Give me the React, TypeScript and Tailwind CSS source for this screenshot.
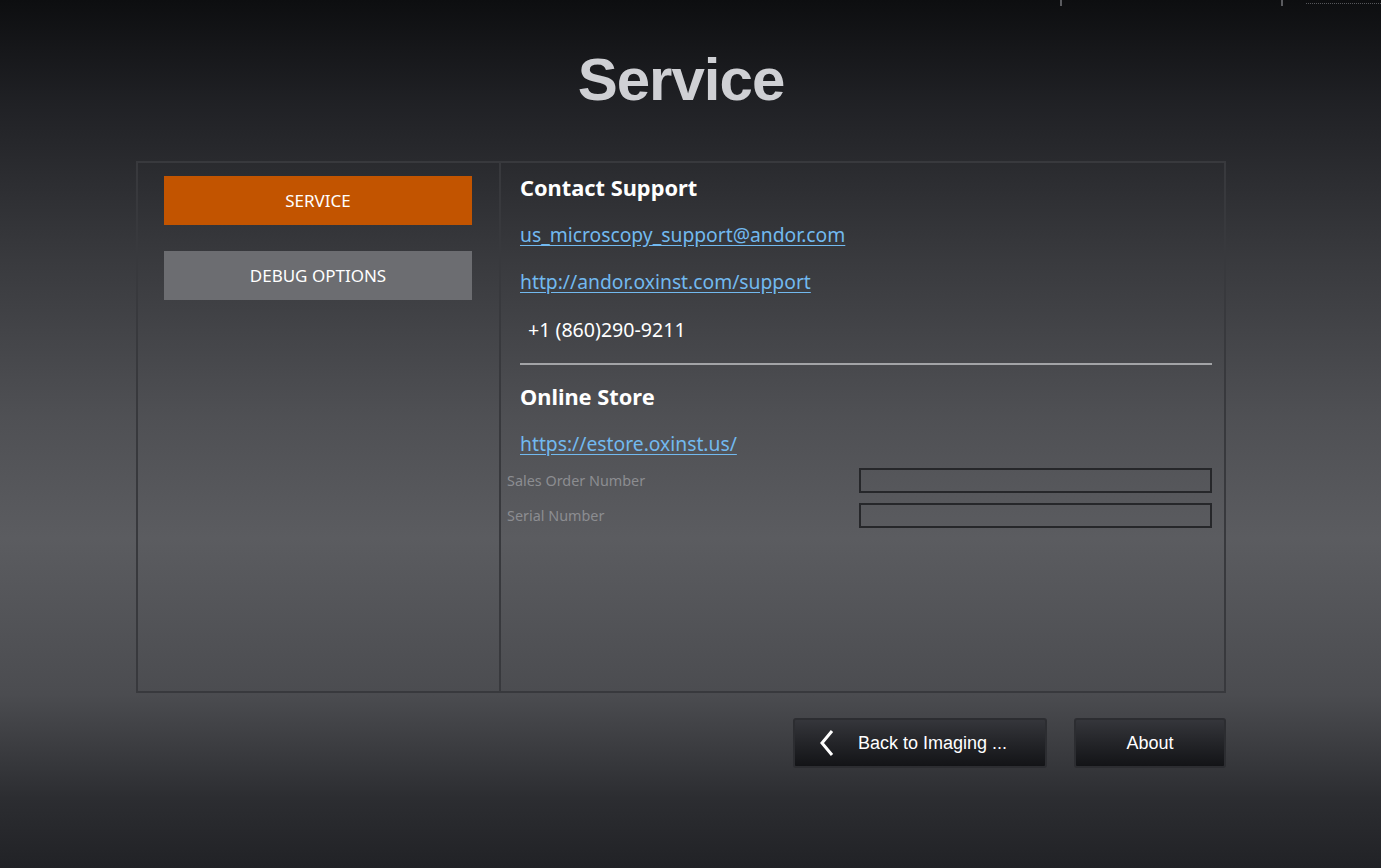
const MenuButton = ({ label, active }: { label: string; active?: boolean }) => (
  <button
    className={
      active
        ? 'w-[308px] h-[49px] bg-[#c25400] text-white text-[17px] flex items-center justify-center'
        : 'w-[308px] h-[49px] bg-[#6c6d71] text-white text-[17px] flex items-center justify-center'
    }
  >
    {label}
  </button>
)

const FooterButton = ({ children, className }: { children: React.ReactNode; className: string }) => (
  <button
    className={
      'h-[50px] rounded-[3px] border-2 border-[#2c2d31] bg-gradient-to-b from-[#35363b] to-[#131417] text-white text-[18px] font-["Liberation_Sans",sans-serif] flex items-center ' +
      className
    }
  >
    {children}
  </button>
)

export default function App() {
  return (
    <div className="relative w-full min-h-[868px] bg-[linear-gradient(to_bottom,#0d0e10_0%,#202125_12%,#393a3e_30%,#4f5054_48%,#5b5c60_62%,#4b4c50_80%,#2c2d31_92%,#212226_100%)] font-['Noto_Sans',sans-serif] overflow-hidden">
      {/* leftover toolbar marks */}
      <div className="absolute top-0 left-[1060px] w-[2px] h-[6px] bg-[#5a5b5f]" />
      <div className="absolute top-0 left-[1281px] w-[2px] h-[6px] bg-[#5a5b5f]" />
      <div className="absolute top-[3px] left-[1306px] w-[75px] border-t border-dotted border-[#55565a]" />

      <div className="ml-[136px] w-[1090px] pt-[40px]">
        <h1 className="h-[80px] flex items-center justify-center text-[60px] font-bold tracking-[-1px] text-[#cfd0d4] font-['Liberation_Sans',sans-serif]">
          Service
        </h1>

        <div className="mt-[41px] h-[532px] border-2 border-[#38393d] flex">
          {/* left menu */}
          <div className="w-[363px] border-r-2 border-[#38393d] pt-[13px] pl-[26px] flex flex-col gap-[26px]">
            <MenuButton label="SERVICE" active />
            <MenuButton label="DEBUG OPTIONS" />
          </div>

          {/* right content */}
          <div className="flex-1 pr-[12px] pt-[1px]">
            <div className="pl-[19px]">
              <div className="h-[48px] flex items-center text-[21.8px] font-bold text-white">Contact Support</div>
              <div className="h-[47px] flex items-center">
                <a className="text-[19.3px] text-[#72b9ef] underline underline-offset-[3px]">us_microscopy_support@andor.com</a>
              </div>
              <div className="h-[47px] flex items-center">
                <a className="text-[19.3px] text-[#72b9ef] underline underline-offset-[3px]">http://andor.oxinst.com/support</a>
              </div>
              <div className="h-[48px] flex items-center pl-[8px] text-[19.6px] text-white">+1 (860)290-9211</div>
              <div className="mt-[9px] h-[2px] bg-[#a3a4a7]" />
              <div className="mt-[8px] h-[48px] flex items-center text-[21.8px] font-bold text-white">Online Store</div>
              <div className="h-[46px] flex items-center">
                <a className="text-[19.3px] text-[#72b9ef] underline underline-offset-[3px]">https://estore.oxinst.us/</a>
              </div>
            </div>
            <div className="mt-[1px] pl-[6px] flex flex-col gap-[10px]">
              <div className="h-[25px] flex items-center">
                <span className="w-[352px] text-[14.4px] text-[#8c8d91]">Sales Order Number</span>
                <div className="flex-1 h-[25px] border-2 border-[#26272a]" />
              </div>
              <div className="h-[25px] flex items-center">
                <span className="w-[352px] text-[14.4px] text-[#8c8d91]">Serial Number</span>
                <div className="flex-1 h-[25px] border-2 border-[#26272a]" />
              </div>
            </div>
          </div>
        </div>

        <div className="mt-[25px] flex justify-end gap-[27px]">
          <FooterButton className="w-[254px] pl-[25px]">
            <svg width="14" height="28" viewBox="0 0 14 28" fill="none">
              <polyline points="12,2 2,14 12,26" stroke="white" strokeWidth="3" strokeLinejoin="miter" />
            </svg>
            <span className="ml-[24px]">Back to Imaging ...</span>
          </FooterButton>
          <FooterButton className="w-[152px] justify-center">About</FooterButton>
        </div>
      </div>
    </div>
  )
}
